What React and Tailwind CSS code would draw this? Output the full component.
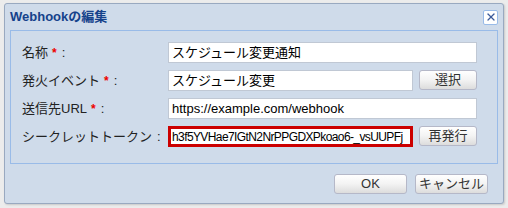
import { X } from "lucide-react";

const font = { fontFamily: '"Liberation Sans", "Noto Sans CJK JP", sans-serif' };

function Btn({ children, className = "" }) {
  return (
    <button
      type="button"
      className={`flex items-center justify-center rounded-[3px] border border-[#b5b8c8] bg-gradient-to-b from-[#ffffff] via-[#f3f3f3] to-[#dcdcdc] text-[13px] text-[#333] ${className}`}
    >
      {children}
    </button>
  );
}

function Label({ text, required }) {
  return (
    <div className="flex w-[146px] shrink-0 items-center text-[13px] text-[#222]">
      <span>{text}</span>
      {required && <span className="ml-[4px] text-[12px] font-bold text-[#e00]">*</span>}
      <span className="ml-[5px]">:</span>
    </div>
  );
}

export default function App() {
  return (
    <div className="h-[208px] w-[508px] bg-[#ececec] pl-[4px] pt-[3px]" style={font}>
      <div className="flex h-[201px] w-[500px] flex-col rounded-[3px] border border-[#99a9c0] bg-[#cfdbea] shadow-[1px_1px_2px_rgba(0,0,0,0.15)]">
        <div className="flex h-[26px] items-center justify-between pl-[5px] pr-[5px]">
          <span className="text-[13px] font-bold text-[#15428b]">Webhookの編集</span>
          <div className="flex h-[15px] w-[15px] items-center justify-center rounded-[2px] border border-[#99bbe8] bg-white">
            <X size={12} strokeWidth={2.5} className="text-[#3b5a9a]" />
          </div>
        </div>
        <div className="mx-[5px] flex flex-col gap-[7px] border border-[#99bbe8] px-[11px] pb-[16px] pt-[11px]">
          <div className="flex h-[21px]">
            <Label text="名称" required />
            <div className="flex h-[21px] w-[309px] shrink-0 items-center border border-[#c0c8d4] bg-white px-[3px] text-[13px] text-black">
              スケジュール変更通知
            </div>
          </div>
          <div className="flex h-[21px]">
            <Label text="発火イベント" required />
            <div className="flex h-[21px] w-[245px] shrink-0 items-center border border-[#c0c8d4] bg-white px-[3px] text-[13px] text-black">
              スケジュール変更
            </div>
            <Btn className="ml-[6px] h-[20px] w-[58px] shrink-0">選択</Btn>
          </div>
          <div className="flex h-[21px]">
            <Label text="送信先URL" required />
            <div className="flex h-[21px] w-[309px] shrink-0 items-center border border-[#c0c8d4] bg-white px-[3px] text-[13px] text-black">
              https://example.com/webhook
            </div>
          </div>
          <div className="flex h-[21px]">
            <Label text="シークレットトークン" />
            <div className="flex h-[21px] w-[245px] shrink-0 items-center overflow-hidden whitespace-nowrap border-[3px] border-[#cc0000] bg-white px-[1px] text-[12px] tracking-[-0.6px] text-black">
              h3f5YVHae7IGtN2NrPPGDXPkoao6-_vsUUPFj
            </div>
            <Btn className="ml-[6px] h-[20px] w-[58px] shrink-0">再発行</Btn>
          </div>
        </div>
        <div className="flex flex-1 items-center justify-end gap-[8px] pr-[15px]">
          <Btn className="h-[20px] w-[73px]">OK</Btn>
          <Btn className="h-[20px] w-[73px]">キャンセル</Btn>
        </div>
      </div>
    </div>
  );
}
